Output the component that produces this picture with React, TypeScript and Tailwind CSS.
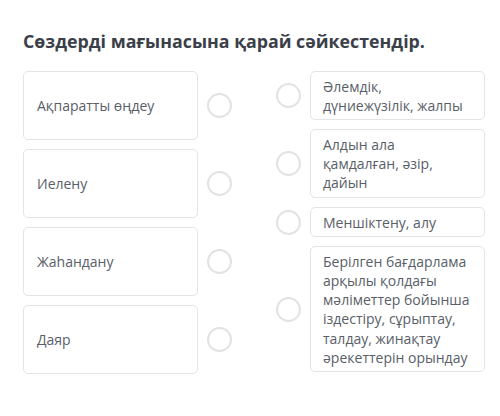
import React from 'react';

const LEFT = ['Ақпаратты өңдеу', 'Иелену', 'Жаһандану', 'Даяр'];

const RIGHT = [
  'Әлемдік, дүниежүзілік, жалпы',
  'Алдын ала қамдалған, әзір, дайын',
  'Меншіктену, алу',
  'Берілген бағдарлама арқылы қолдағы мәліметтер бойынша іздестіру, сұрыптау, талдау, жинақтау әрекеттерін орындау',
];

function Dot() {
  return <span className="block w-[25px] h-[25px] shrink-0 rounded-full border-2 border-[#e2e2e2] bg-white" />;
}

export default function App() {
  return (
    <div
      className="w-[500px] h-[416px] bg-white pl-[23px] pr-[15px] pt-[28px]"
      style={{ fontFamily: '"Open Sans", "Noto Sans", sans-serif' }}
    >
      <h1 className="text-[17.8px] leading-[26px] font-bold text-[#3b3f49]">
        Сөздерді мағынасына қарай сәйкестендір.
      </h1>

      <div className="mt-[17px] flex justify-between">
        {/* left column */}
        <div className="flex flex-col gap-[9px]">
          {LEFT.map((t) => (
            <div key={t} className="flex items-center gap-[9px]">
              <div className="w-[175px] h-[69px] flex items-center px-[13px] border border-[#e4e4e4] rounded-[5px] text-[14px] text-[#595e68]">
                {t}
              </div>
              <Dot />
            </div>
          ))}
        </div>

        {/* right column */}
        <div className="flex flex-col gap-[9px]">
          {RIGHT.map((t) => (
            <div key={t} className="flex items-center gap-[9px]">
              <Dot />
              <div className="w-[175px] px-[12px] py-[4.5px] border border-[#e4e4e4] rounded-[5px] text-[14px] leading-[19.2px] text-[#595e68]">
                {t}
              </div>
            </div>
          ))}
        </div>
      </div>
    </div>
  );
}
